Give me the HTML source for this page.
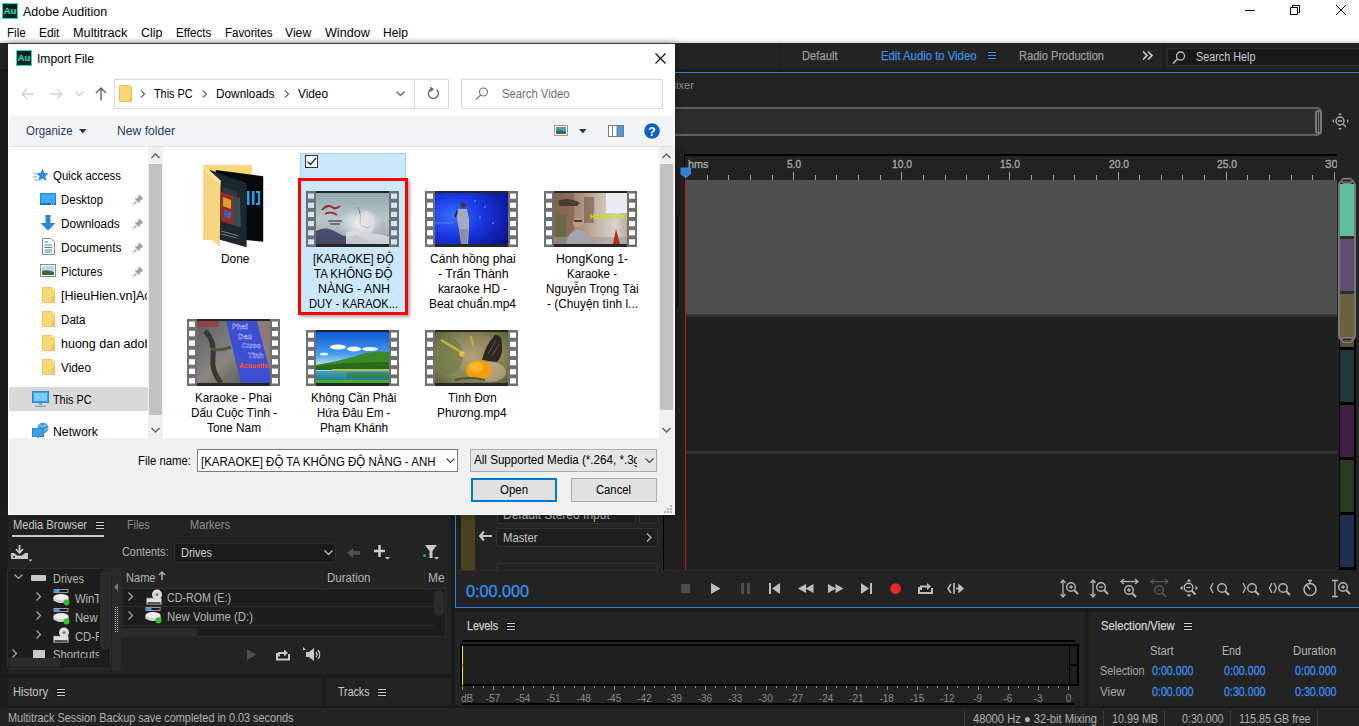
<!DOCTYPE html><html><head><meta charset="utf-8"><style>
*{margin:0;padding:0;box-sizing:border-box}
html,body{width:1359px;height:726px;overflow:hidden;background:#1d1d1d;font-family:"Liberation Sans",sans-serif;position:relative}
.a{position:absolute}
.t{position:absolute;white-space:nowrap;line-height:1}
.au{position:absolute;width:16px;height:16px;background:#00231f;border:1px solid #1fe0c0;color:#2fe8c8;font-size:9.5px;line-height:14px;text-align:center;font-weight:bold}
.c{text-align:center}
svg{position:absolute;overflow:visible}
</style></head><body>
<div class="a" style="left:0px;top:0px;width:1359px;height:43px;background:#fff"></div>
<div class="au" style="left:2px;top:3px">Au</div>
<div class="t" style="left:23px;top:6px;font-size:12.5px;color:#000;">Adobe Audition</div>
<div class="a" style="left:1245px;top:10px;width:10px;height:1px;background:#000"></div>
<svg style="left:1289px;top:4px" width="14" height="14"><path d="M3.5 3.5V1.5H10.5V8.5H8.5M1.5 3.5H8.5V10.5H1.5Z" fill="none" stroke="#000" stroke-width="1"/></svg>
<svg style="left:1335px;top:4px" width="13" height="13"><path d="M1 1L11 11M11 1L1 11" stroke="#000" stroke-width="1"/></svg>
<div class="t" style="left:7.0px;top:27px;font-size:12.5px;color:#000;transform:scaleX(0.9285);transform-origin:0 0;">File</div>
<div class="t" style="left:38.8px;top:27px;font-size:12.5px;color:#000;transform:scaleX(0.9471);transform-origin:0 0;">Edit</div>
<div class="t" style="left:73.0px;top:27px;font-size:12.5px;color:#000;transform:scaleX(1.0154);transform-origin:0 0;">Multitrack</div>
<div class="t" style="left:140.6px;top:27px;font-size:12.5px;color:#000;transform:scaleX(0.9985);transform-origin:0 0;">Clip</div>
<div class="t" style="left:176.0px;top:27px;font-size:12.5px;color:#000;transform:scaleX(0.9268);transform-origin:0 0;">Effects</div>
<div class="t" style="left:224.9px;top:27px;font-size:12.5px;color:#000;transform:scaleX(0.9241);transform-origin:0 0;">Favorites</div>
<div class="t" style="left:285.3px;top:27px;font-size:12.5px;color:#000;transform:scaleX(0.9752);transform-origin:0 0;">View</div>
<div class="t" style="left:324.8px;top:27px;font-size:12.5px;color:#000;transform:scaleX(1.0055);transform-origin:0 0;">Window</div>
<div class="t" style="left:383.0px;top:27px;font-size:12.5px;color:#000;transform:scaleX(0.9686);transform-origin:0 0;">Help</div>
<div class="a" style="left:0px;top:39px;width:1359px;height:4px;background:linear-gradient(#fff,#d8d8d8)"></div>
<div class="a" style="left:0px;top:43px;width:1359px;height:26px;background:#232323"></div>
<div class="a" style="left:0px;top:69px;width:1359px;height:3px;background:#1a1a1a"></div>
<div class="a" style="left:8px;top:72px;width:1351px;height:1px;background:#2f86d8"></div>
<div class="a" style="left:779px;top:43px;width:1px;height:26px;background:#1a1a1a"></div>
<div class="t" style="left:802px;top:50px;font-size:12.5px;color:#9c9c9c;transform:scaleX(0.8964);transform-origin:0 0;-webkit-text-stroke:0.25px #9c9c9c">Default</div>
<div class="t" style="left:881px;top:50px;font-size:12.5px;color:#3d8fe0;transform:scaleX(0.9061);transform-origin:0 0;-webkit-text-stroke:0.25px #3d8fe0">Edit Audio to Video</div>
<div class="a" style="left:987px;top:51px;width:10px;height:3px;background:#191919"></div>
<div class="a" style="left:987px;top:54px;width:10px;height:3px;background:#191919"></div>
<div class="a" style="left:987px;top:57px;width:10px;height:3px;background:#191919"></div>
<div class="a" style="left:988px;top:52px;width:8px;height:1px;background:#3a90f0"></div>
<div class="a" style="left:988px;top:55px;width:8px;height:1px;background:#3a90f0"></div>
<div class="a" style="left:988px;top:58px;width:8px;height:1px;background:#3a90f0"></div>
<div class="t" style="left:1019px;top:50px;font-size:12.5px;color:#9c9c9c;transform:scaleX(0.8865);transform-origin:0 0;-webkit-text-stroke:0.25px #9c9c9c">Radio Production</div>
<svg style="left:1142px;top:51px" width="12" height="9"><path d="M1 0.5L5 4.5L1 8.5M6 0.5L10 4.5L6 8.5" fill="none" stroke="#d0d0d0" stroke-width="1.6"/></svg>
<div class="a" style="left:1163px;top:43px;width:2px;height:26px;background:#1b1b1b"></div>
<div class="a" style="left:1167px;top:48px;width:200px;height:18px;background:#191919;border:1px solid #2e2e2e;border-radius:3px"></div>
<svg style="left:1172px;top:51px" width="14" height="14"><circle cx="8.5" cy="5" r="4" fill="none" stroke="#bdbdbd" stroke-width="1.3"/><path d="M5.5 8L1 12.5" stroke="#bdbdbd" stroke-width="1.6"/></svg>
<div class="t" style="left:1196px;top:51px;font-size:12.5px;color:#c8ccd2;transform:scaleX(0.8650);transform-origin:0 0;">Search Help</div>
<div class="a" style="left:0px;top:73px;width:1359px;height:535px;background:#232323"></div>
<div class="t" style="left:667px;top:80px;font-size:11px;color:#8e8e8e;">Mixer</div>
<div class="a" style="left:600px;top:107px;width:722px;height:29px;background:#2d2d2d;border:2px solid #5f5f5f;border-radius:5px"></div>
<div class="a" style="left:1315px;top:110px;width:7px;height:24px;border:2px solid #777;border-radius:3px;background:#2d2d2d"></div>
<div class="a" style="left:1318px;top:112px;width:1px;height:20px;background:#777"></div>
<svg style="left:1332px;top:113px" width="18" height="18"><circle cx="8" cy="8" r="4" fill="none" stroke="#aaa" stroke-width="1.4"/><path d="M6 8H10M11 11L14 14" stroke="#aaa" stroke-width="1.4"/><path d="M8 0L10 2H6ZM8 17L6 15H10ZM0 8L2 6V10ZM17 8L15 10V6Z" fill="#aaa"/></svg>
<div class="a" style="left:675px;top:147px;width:10px;height:423px;background:#202020"></div>
<div class="a" style="left:677px;top:215px;width:1px;height:93px;background:#000"></div>
<div class="a" style="left:684px;top:154px;width:654px;height:26px;background:#222;border-top:2px solid #000;border-left:1px solid #000"></div>
<div class="t" style="left:688px;top:159px;font-size:11.5px;color:#a8a8a8;transform:scaleX(0.9436);transform-origin:0 0;-webkit-text-stroke:0.35px #a8a8a8">hms</div>
<div class="a" style="left:707px;top:175px;width:1px;height:5px;background:#a0a0a0"></div>
<div class="a" style="left:728px;top:175px;width:1px;height:5px;background:#a0a0a0"></div>
<div class="a" style="left:750px;top:175px;width:1px;height:5px;background:#a0a0a0"></div>
<div class="a" style="left:772px;top:175px;width:1px;height:5px;background:#a0a0a0"></div>
<div class="a" style="left:793px;top:172px;width:1px;height:8px;background:#a0a0a0"></div>
<div class="t" style="left:786.50px;top:159px;font-size:11.5px;color:#a8a8a8;transform:scaleX(0.8758);transform-origin:0 0;-webkit-text-stroke:0.35px #a8a8a8">5.0</div>
<div class="a" style="left:815px;top:175px;width:1px;height:5px;background:#a0a0a0"></div>
<div class="a" style="left:836px;top:175px;width:1px;height:5px;background:#a0a0a0"></div>
<div class="a" style="left:858px;top:175px;width:1px;height:5px;background:#a0a0a0"></div>
<div class="a" style="left:880px;top:175px;width:1px;height:5px;background:#a0a0a0"></div>
<div class="a" style="left:901px;top:172px;width:1px;height:8px;background:#a0a0a0"></div>
<div class="t" style="left:891.50px;top:159px;font-size:11.5px;color:#a8a8a8;transform:scaleX(0.8937);transform-origin:0 0;-webkit-text-stroke:0.35px #a8a8a8">10.0</div>
<div class="a" style="left:923px;top:175px;width:1px;height:5px;background:#a0a0a0"></div>
<div class="a" style="left:945px;top:175px;width:1px;height:5px;background:#a0a0a0"></div>
<div class="a" style="left:966px;top:175px;width:1px;height:5px;background:#a0a0a0"></div>
<div class="a" style="left:988px;top:175px;width:1px;height:5px;background:#a0a0a0"></div>
<div class="a" style="left:1009px;top:172px;width:1px;height:8px;background:#a0a0a0"></div>
<div class="t" style="left:999.50px;top:159px;font-size:11.5px;color:#a8a8a8;transform:scaleX(0.8937);transform-origin:0 0;-webkit-text-stroke:0.35px #a8a8a8">15.0</div>
<div class="a" style="left:1031px;top:175px;width:1px;height:5px;background:#a0a0a0"></div>
<div class="a" style="left:1053px;top:175px;width:1px;height:5px;background:#a0a0a0"></div>
<div class="a" style="left:1074px;top:175px;width:1px;height:5px;background:#a0a0a0"></div>
<div class="a" style="left:1096px;top:175px;width:1px;height:5px;background:#a0a0a0"></div>
<div class="a" style="left:1118px;top:172px;width:1px;height:8px;background:#a0a0a0"></div>
<div class="t" style="left:1108.50px;top:159px;font-size:11.5px;color:#a8a8a8;transform:scaleX(0.8937);transform-origin:0 0;-webkit-text-stroke:0.35px #a8a8a8">20.0</div>
<div class="a" style="left:1139px;top:175px;width:1px;height:5px;background:#a0a0a0"></div>
<div class="a" style="left:1161px;top:175px;width:1px;height:5px;background:#a0a0a0"></div>
<div class="a" style="left:1182px;top:175px;width:1px;height:5px;background:#a0a0a0"></div>
<div class="a" style="left:1204px;top:175px;width:1px;height:5px;background:#a0a0a0"></div>
<div class="a" style="left:1226px;top:172px;width:1px;height:8px;background:#a0a0a0"></div>
<div class="t" style="left:1216.50px;top:159px;font-size:11.5px;color:#a8a8a8;transform:scaleX(0.8937);transform-origin:0 0;-webkit-text-stroke:0.35px #a8a8a8">25.0</div>
<div class="a" style="left:1247px;top:175px;width:1px;height:5px;background:#a0a0a0"></div>
<div class="a" style="left:1269px;top:175px;width:1px;height:5px;background:#a0a0a0"></div>
<div class="a" style="left:1291px;top:175px;width:1px;height:5px;background:#a0a0a0"></div>
<div class="a" style="left:1312px;top:175px;width:1px;height:5px;background:#a0a0a0"></div>
<div class="a" style="left:1334px;top:172px;width:1px;height:8px;background:#a0a0a0"></div>
<div class="t" style="left:1325px;top:159px;width:12px;overflow:hidden;font-size:11.5px;color:#a8a8a8;-webkit-text-stroke:0.35px #a8a8a8">30</div>
<div class="a" style="left:685px;top:180px;width:652px;height:134px;background:#4f4f4f"></div>
<div class="a" style="left:685px;top:314px;width:652px;height:3px;background:#333"></div>
<div class="a" style="left:685px;top:317px;width:652px;height:134px;background:#1f1f1f"></div>
<div class="a" style="left:685px;top:451px;width:652px;height:3px;background:#333"></div>
<div class="a" style="left:685px;top:454px;width:652px;height:116px;background:#1f1f1f"></div>
<div class="a" style="left:1337px;top:154px;width:22px;height:416px;background:#232323"></div>
<div class="a" style="left:685px;top:167px;width:1px;height:403px;background:#c8141a"></div>
<svg style="left:680px;top:167px" width="12" height="12"><path d="M0.5 0.5H11V7L5.7 11.5L0.5 7Z" fill="#2f86d8"/></svg>
<div class="a" style="left:1339px;top:181px;width:17px;height:389px;background:#000"></div>
<div class="a" style="left:1340px;top:184px;width:14px;height:52px;background:#5fbf9a"></div>
<div class="a" style="left:1340px;top:239px;width:14px;height:52px;background:#5e4f72"></div>
<div class="a" style="left:1340px;top:294px;width:14px;height:52px;background:#69643f"></div>
<div class="a" style="left:1340px;top:350px;width:14px;height:52px;background:#1e3b3a"></div>
<div class="a" style="left:1340px;top:405px;width:14px;height:52px;background:#3e2142"></div>
<div class="a" style="left:1340px;top:460px;width:14px;height:52px;background:#2d3a22"></div>
<div class="a" style="left:1340px;top:515px;width:14px;height:52px;background:#1d3050"></div>
<div class="a" style="left:1340px;top:236px;width:14px;height:3px;background:#2e2e2e"></div>
<div class="a" style="left:1340px;top:291px;width:14px;height:3px;background:#2e2e2e"></div>
<div class="a" style="left:1340px;top:341px;width:14px;height:6px;background:#5a5030"></div>
<div class="a" style="left:1338px;top:180px;width:18px;height:161px;border:2px solid #777;border-radius:5px"></div>
<div class="a" style="left:1341px;top:178px;width:12px;height:6px;background:#555;border:1px solid #888;border-radius:3px"></div>
<div class="a" style="left:1343px;top:180px;width:8px;height:1px;background:#222"></div>
<div class="a" style="left:1341px;top:337px;width:12px;height:6px;background:#555;border:1px solid #888;border-radius:3px"></div>
<div class="a" style="left:1343px;top:339px;width:8px;height:1px;background:#222"></div>
<div class="a" style="left:455px;top:73px;width:1px;height:535px;background:#2f86d8"></div>
<div class="a" style="left:456px;top:147px;width:6px;height:423px;background:#1e1e1e"></div>
<div class="a" style="left:461px;top:147px;width:14px;height:423px;background:#4a4220"></div>
<div class="a" style="left:475px;top:147px;width:188px;height:423px;background:#232323"></div>
<div class="a" style="left:663px;top:147px;width:1px;height:423px;background:#000"></div>
<div class="a" style="left:664px;top:147px;width:11px;height:423px;background:#1f1f1f"></div>
<div class="a" style="left:497px;top:505px;width:139px;height:19px;border:1px solid #333;border-radius:2px;background:#1e1e1e"></div>
<div class="t" style="left:503px;top:509px;font-size:12px;color:#b8b8b8;">Default Stereo Input</div>
<div class="a" style="left:639px;top:505px;width:20px;height:19px;border:1px solid #333;border-radius:2px"></div>
<div class="a" style="left:496px;top:528px;width:162px;height:19px;border:1px solid #333;border-radius:2px;background:#1e1e1e"></div>
<div class="t" style="left:503px;top:532px;font-size:12.5px;color:#c4c4c4;transform:scaleX(0.9032);transform-origin:0 0;">Master</div>
<svg style="left:646px;top:533px" width="6" height="9"><path d="M1 0.5L5 4.5L1 8.5" fill="none" stroke="#bbb" stroke-width="1.2"/></svg>
<svg style="left:479px;top:531px" width="14" height="10"><path d="M5 0.5L1 5L5 9.5M1 5H13" fill="none" stroke="#c8c8c8" stroke-width="2"/></svg>
<div class="a" style="left:496px;top:563px;width:162px;height:10px;border:1px solid #333;border-radius:3px"></div>
<div class="a" style="left:456px;top:570px;width:881px;height:1px;background:#2c2c2c"></div>
<div class="a" style="left:456px;top:571px;width:903px;height:36px;background:#232323"></div>
<div class="a" style="left:455px;top:607px;width:904px;height:1px;background:#2f86d8"></div>
<div class="t" style="left:466px;top:583px;font-size:17px;color:#3b90ee;transform:scaleX(0.9521);transform-origin:0 0;-webkit-text-stroke:0.3px #3b90ee">0:00.000</div>
<svg style="left:681px;top:584px" width="10" height="10"><rect x="0" y="0" width="9" height="9" fill="#4d4d4d"/></svg>
<svg style="left:711px;top:583px" width="10" height="12"><path d="M0 0L9.5 5.5L0 11Z" fill="#bdbdbd"/></svg>
<svg style="left:741px;top:583px" width="10" height="12"><rect x="0" y="0" width="3" height="11" fill="#4d4d4d"/><rect x="6" y="0" width="3" height="11" fill="#4d4d4d"/></svg>
<svg style="left:769px;top:583px" width="12" height="12"><rect x="0" y="0" width="2" height="11" fill="#bdbdbd"/><path d="M11 0V11L3 5.5Z" fill="#bdbdbd"/></svg>
<svg style="left:798px;top:584px" width="16" height="10"><path d="M8 0V9L0 4.5ZM15.5 0V9L7.5 4.5Z" fill="#bdbdbd"/></svg>
<svg style="left:828px;top:584px" width="16" height="10"><path d="M0 0V9L8 4.5ZM7.5 0V9L15.5 4.5Z" fill="#bdbdbd"/></svg>
<svg style="left:861px;top:583px" width="12" height="12"><path d="M0 0V11L8 5.5Z" fill="#bdbdbd"/><rect x="9" y="0" width="2" height="11" fill="#bdbdbd"/></svg>
<svg style="left:890px;top:583px" width="12" height="12"><circle cx="5.6" cy="5.6" r="5.3" fill="#e8282c"/></svg>
<svg style="left:918px;top:581px" width="16" height="14"><path d="M1 6V12H14V7" fill="none" stroke="#bdbdbd" stroke-width="2"/><path d="M3 9V5.5H9" fill="none" stroke="#bdbdbd" stroke-width="2"/><path d="M9 2L13 5.5L9 9Z" fill="#bdbdbd"/></svg>
<svg style="left:947px;top:582px" width="18" height="13"><path d="M4 2L1 6.5L4 11M7 1V12" fill="none" stroke="#bdbdbd" stroke-width="1.6"/><path d="M9 6.5H14M12 3L16 6.5L12 10Z" fill="#bdbdbd" stroke="#bdbdbd" stroke-width="1.4"/></svg>
<svg style="left:1059px;top:579px" width="22" height="20"><path d="M4 1V18" stroke="#b5b5b5" stroke-width="1.3"/><path d="M1.5 4L4 1L6.5 4M1.5 15L4 18L6.5 15" fill="none" stroke="#b5b5b5" stroke-width="1.3"/><circle cx="12" cy="8" r="4.3" fill="none" stroke="#b5b5b5" stroke-width="1.4"/><path d="M15 11L19 15" stroke="#b5b5b5" stroke-width="2"/><path d="M10 8H14" stroke="#b5b5b5" stroke-width="1.2"/><path d="M12 6V10" stroke="#b5b5b5" stroke-width="1.2"/></svg>
<svg style="left:1089px;top:579px" width="22" height="20"><path d="M4 1V18" stroke="#b5b5b5" stroke-width="1.3"/><path d="M1.5 4L4 1L6.5 4M1.5 15L4 18L6.5 15" fill="none" stroke="#b5b5b5" stroke-width="1.3"/><circle cx="12" cy="8" r="4.3" fill="none" stroke="#b5b5b5" stroke-width="1.4"/><path d="M15 11L19 15" stroke="#b5b5b5" stroke-width="2"/><path d="M10 8H14" stroke="#b5b5b5" stroke-width="1.2"/></svg>
<svg style="left:1120px;top:579px" width="22" height="20"><path d="M1 2.5H18" stroke="#b5b5b5" stroke-width="1.3"/><path d="M4 0L1 2.5L4 5M15 0L18 2.5L15 5" fill="none" stroke="#b5b5b5" stroke-width="1.3"/><circle cx="9" cy="11" r="4.3" fill="none" stroke="#b5b5b5" stroke-width="1.4"/><path d="M12 14L16 18" stroke="#b5b5b5" stroke-width="2"/><path d="M7 11H11" stroke="#b5b5b5" stroke-width="1.2"/><path d="M9 9V13" stroke="#b5b5b5" stroke-width="1.2"/></svg>
<svg style="left:1150px;top:579px" width="22" height="20"><path d="M1 2.5H18" stroke="#555" stroke-width="1.3"/><path d="M4 0L1 2.5L4 5M15 0L18 2.5L15 5" fill="none" stroke="#555" stroke-width="1.3"/><circle cx="9" cy="11" r="4.3" fill="none" stroke="#555" stroke-width="1.4"/><path d="M12 14L16 18" stroke="#555" stroke-width="2"/><path d="M7 11H11" stroke="#555" stroke-width="1.2"/></svg>
<svg style="left:1180px;top:579px" width="22" height="20"><path d="M9 0L11.5 2.5H6.5ZM9 18L6.5 15.5H11.5ZM0 9L2.5 6.5V11.5ZM18 9L15.5 11.5V6.5Z" fill="#b5b5b5"/><circle cx="8.5" cy="8.5" r="4.3" fill="none" stroke="#b5b5b5" stroke-width="1.4"/><path d="M11.5 11.5L15.5 15.5" stroke="#b5b5b5" stroke-width="2"/><path d="M6.5 8.5H10.5" stroke="#b5b5b5" stroke-width="1.2"/></svg>
<svg style="left:1209px;top:579px" width="22" height="20"><path d="M4 4L1.5 9L4 14" fill="none" stroke="#b5b5b5" stroke-width="1.3"/><circle cx="13" cy="9" r="4.3" fill="none" stroke="#b5b5b5" stroke-width="1.4"/><path d="M16 12L20 16" stroke="#b5b5b5" stroke-width="2"/></svg>
<svg style="left:1242px;top:579px" width="22" height="20"><path d="M1 4L3.5 9L1 14" fill="none" stroke="#b5b5b5" stroke-width="1.3"/><circle cx="10" cy="9" r="4.3" fill="none" stroke="#b5b5b5" stroke-width="1.4"/><path d="M13 12L17 16" stroke="#b5b5b5" stroke-width="2"/></svg>
<svg style="left:1268px;top:579px" width="25" height="20"><path d="M4 4L1.5 9L4 14M6 4L8.5 9L6 14" fill="none" stroke="#b5b5b5" stroke-width="1.3"/><circle cx="15" cy="9" r="4.3" fill="none" stroke="#b5b5b5" stroke-width="1.4"/><path d="M18 12L22 16" stroke="#b5b5b5" stroke-width="2"/></svg>
<svg style="left:1302px;top:579px" width="22" height="20"><circle cx="8" cy="10.5" r="6" fill="none" stroke="#b5b5b5" stroke-width="1.6"/><path d="M8 10.5L5 6M6 1.5H10M8 1.5V4" stroke="#b5b5b5" stroke-width="1.5"/></svg>
<svg style="left:1331px;top:579px" width="22" height="20"><path d="M4 1V18M1 1.5H7M1 17.5H7" stroke="#b5b5b5" stroke-width="1.3"/><circle cx="12" cy="8" r="4.3" fill="none" stroke="#b5b5b5" stroke-width="1.4"/><path d="M15 11L19 15" stroke="#b5b5b5" stroke-width="2"/><path d="M10 8H14" stroke="#b5b5b5" stroke-width="1.2"/><path d="M12 6V10" stroke="#b5b5b5" stroke-width="1.2"/></svg>
<div class="a" style="left:455px;top:608px;width:904px;height:4px;background:#1a1a1a"></div>
<div class="a" style="left:0px;top:608px;width:455px;height:70px;background:#1a1a1a"></div>
<div class="a" style="left:455px;top:612px;width:630px;height:94px;background:#232323"></div>
<div class="a" style="left:1085px;top:612px;width:4px;height:94px;background:#1a1a1a"></div>
<div class="a" style="left:1089px;top:612px;width:270px;height:94px;background:#232323"></div>
<div class="t" style="left:467px;top:620px;font-size:12.5px;color:#cfcfcf;transform:scaleX(0.8580);transform-origin:0 0;-webkit-text-stroke:0.25px #cfcfcf">Levels</div>
<div class="a" style="left:506px;top:622px;width:10px;height:3px;background:#191919"></div>
<div class="a" style="left:506px;top:625px;width:10px;height:3px;background:#191919"></div>
<div class="a" style="left:506px;top:628px;width:10px;height:3px;background:#191919"></div>
<div class="a" style="left:507px;top:623px;width:8px;height:1px;background:#d0d0d0"></div>
<div class="a" style="left:507px;top:626px;width:8px;height:1px;background:#d0d0d0"></div>
<div class="a" style="left:507px;top:629px;width:8px;height:1px;background:#d0d0d0"></div>
<div class="a" style="left:462px;top:640px;width:613px;height:2px;background:#000"></div>
<div class="a" style="left:460px;top:644px;width:619px;height:42px;background:#1f1f1f;border:2px solid #000"></div>
<div class="a" style="left:1069px;top:644px;width:1px;height:42px;background:#000"></div>
<div class="a" style="left:1069px;top:664px;width:10px;height:2px;background:#000"></div>
<div class="a" style="left:462px;top:646px;width:1px;height:19px;background:#f0e800"></div>
<div class="a" style="left:462px;top:666px;width:1px;height:19px;background:#f0e800"></div>
<div class="a" style="left:462px;top:703px;width:613px;height:2px;background:#000"></div>
<div class="a" style="left:462px;top:686px;width:1px;height:4px;background:#8c8c8c"></div>
<div class="a" style="left:473px;top:686px;width:1px;height:2px;background:#8c8c8c"></div>
<div class="a" style="left:483px;top:686px;width:1px;height:2px;background:#8c8c8c"></div>
<div class="a" style="left:493px;top:686px;width:1px;height:4px;background:#8c8c8c"></div>
<div class="a" style="left:503px;top:686px;width:1px;height:2px;background:#8c8c8c"></div>
<div class="a" style="left:513px;top:686px;width:1px;height:2px;background:#8c8c8c"></div>
<div class="a" style="left:523px;top:686px;width:1px;height:4px;background:#8c8c8c"></div>
<div class="a" style="left:533px;top:686px;width:1px;height:2px;background:#8c8c8c"></div>
<div class="a" style="left:543px;top:686px;width:1px;height:2px;background:#8c8c8c"></div>
<div class="a" style="left:553px;top:686px;width:1px;height:4px;background:#8c8c8c"></div>
<div class="a" style="left:564px;top:686px;width:1px;height:2px;background:#8c8c8c"></div>
<div class="a" style="left:574px;top:686px;width:1px;height:2px;background:#8c8c8c"></div>
<div class="a" style="left:584px;top:686px;width:1px;height:4px;background:#8c8c8c"></div>
<div class="a" style="left:594px;top:686px;width:1px;height:2px;background:#8c8c8c"></div>
<div class="a" style="left:604px;top:686px;width:1px;height:2px;background:#8c8c8c"></div>
<div class="a" style="left:614px;top:686px;width:1px;height:4px;background:#8c8c8c"></div>
<div class="a" style="left:624px;top:686px;width:1px;height:2px;background:#8c8c8c"></div>
<div class="a" style="left:634px;top:686px;width:1px;height:2px;background:#8c8c8c"></div>
<div class="a" style="left:644px;top:686px;width:1px;height:4px;background:#8c8c8c"></div>
<div class="a" style="left:654px;top:686px;width:1px;height:2px;background:#8c8c8c"></div>
<div class="a" style="left:664px;top:686px;width:1px;height:2px;background:#8c8c8c"></div>
<div class="a" style="left:675px;top:686px;width:1px;height:4px;background:#8c8c8c"></div>
<div class="a" style="left:685px;top:686px;width:1px;height:2px;background:#8c8c8c"></div>
<div class="a" style="left:695px;top:686px;width:1px;height:2px;background:#8c8c8c"></div>
<div class="a" style="left:705px;top:686px;width:1px;height:4px;background:#8c8c8c"></div>
<div class="a" style="left:715px;top:686px;width:1px;height:2px;background:#8c8c8c"></div>
<div class="a" style="left:725px;top:686px;width:1px;height:2px;background:#8c8c8c"></div>
<div class="a" style="left:735px;top:686px;width:1px;height:4px;background:#8c8c8c"></div>
<div class="a" style="left:745px;top:686px;width:1px;height:2px;background:#8c8c8c"></div>
<div class="a" style="left:755px;top:686px;width:1px;height:2px;background:#8c8c8c"></div>
<div class="a" style="left:766px;top:686px;width:1px;height:4px;background:#8c8c8c"></div>
<div class="a" style="left:776px;top:686px;width:1px;height:2px;background:#8c8c8c"></div>
<div class="a" style="left:786px;top:686px;width:1px;height:2px;background:#8c8c8c"></div>
<div class="a" style="left:796px;top:686px;width:1px;height:4px;background:#8c8c8c"></div>
<div class="a" style="left:806px;top:686px;width:1px;height:2px;background:#8c8c8c"></div>
<div class="a" style="left:816px;top:686px;width:1px;height:2px;background:#8c8c8c"></div>
<div class="a" style="left:826px;top:686px;width:1px;height:4px;background:#8c8c8c"></div>
<div class="a" style="left:836px;top:686px;width:1px;height:2px;background:#8c8c8c"></div>
<div class="a" style="left:846px;top:686px;width:1px;height:2px;background:#8c8c8c"></div>
<div class="a" style="left:856px;top:686px;width:1px;height:4px;background:#8c8c8c"></div>
<div class="a" style="left:866px;top:686px;width:1px;height:2px;background:#8c8c8c"></div>
<div class="a" style="left:877px;top:686px;width:1px;height:2px;background:#8c8c8c"></div>
<div class="a" style="left:887px;top:686px;width:1px;height:4px;background:#8c8c8c"></div>
<div class="a" style="left:897px;top:686px;width:1px;height:2px;background:#8c8c8c"></div>
<div class="a" style="left:907px;top:686px;width:1px;height:2px;background:#8c8c8c"></div>
<div class="a" style="left:917px;top:686px;width:1px;height:4px;background:#8c8c8c"></div>
<div class="a" style="left:927px;top:686px;width:1px;height:2px;background:#8c8c8c"></div>
<div class="a" style="left:937px;top:686px;width:1px;height:2px;background:#8c8c8c"></div>
<div class="a" style="left:947px;top:686px;width:1px;height:4px;background:#8c8c8c"></div>
<div class="a" style="left:957px;top:686px;width:1px;height:2px;background:#8c8c8c"></div>
<div class="a" style="left:968px;top:686px;width:1px;height:2px;background:#8c8c8c"></div>
<div class="a" style="left:978px;top:686px;width:1px;height:4px;background:#8c8c8c"></div>
<div class="a" style="left:988px;top:686px;width:1px;height:2px;background:#8c8c8c"></div>
<div class="a" style="left:998px;top:686px;width:1px;height:2px;background:#8c8c8c"></div>
<div class="a" style="left:1008px;top:686px;width:1px;height:4px;background:#8c8c8c"></div>
<div class="a" style="left:1018px;top:686px;width:1px;height:2px;background:#8c8c8c"></div>
<div class="a" style="left:1028px;top:686px;width:1px;height:2px;background:#8c8c8c"></div>
<div class="a" style="left:1038px;top:686px;width:1px;height:4px;background:#8c8c8c"></div>
<div class="a" style="left:1048px;top:686px;width:1px;height:2px;background:#8c8c8c"></div>
<div class="a" style="left:1058px;top:686px;width:1px;height:2px;background:#8c8c8c"></div>
<div class="a" style="left:1068px;top:686px;width:1px;height:4px;background:#8c8c8c"></div>
<div class="t" style="left:461px;top:694px;font-size:10px;color:#8a8a8a;">dB</div>
<div class="t" style="left:472.8px;top:694px;width:40px;text-align:center;font-size:10px;color:#8a8a8a">-57</div>
<div class="t" style="left:503.1px;top:694px;width:40px;text-align:center;font-size:10px;color:#8a8a8a">-54</div>
<div class="t" style="left:533.4px;top:694px;width:40px;text-align:center;font-size:10px;color:#8a8a8a">-51</div>
<div class="t" style="left:563.7px;top:694px;width:40px;text-align:center;font-size:10px;color:#8a8a8a">-48</div>
<div class="t" style="left:594.0px;top:694px;width:40px;text-align:center;font-size:10px;color:#8a8a8a">-45</div>
<div class="t" style="left:624.3px;top:694px;width:40px;text-align:center;font-size:10px;color:#8a8a8a">-42</div>
<div class="t" style="left:654.6px;top:694px;width:40px;text-align:center;font-size:10px;color:#8a8a8a">-39</div>
<div class="t" style="left:684.9px;top:694px;width:40px;text-align:center;font-size:10px;color:#8a8a8a">-36</div>
<div class="t" style="left:715.2px;top:694px;width:40px;text-align:center;font-size:10px;color:#8a8a8a">-33</div>
<div class="t" style="left:745.5px;top:694px;width:40px;text-align:center;font-size:10px;color:#8a8a8a">-30</div>
<div class="t" style="left:775.8px;top:694px;width:40px;text-align:center;font-size:10px;color:#8a8a8a">-27</div>
<div class="t" style="left:806.1px;top:694px;width:40px;text-align:center;font-size:10px;color:#8a8a8a">-24</div>
<div class="t" style="left:836.4px;top:694px;width:40px;text-align:center;font-size:10px;color:#8a8a8a">-21</div>
<div class="t" style="left:866.7px;top:694px;width:40px;text-align:center;font-size:10px;color:#8a8a8a">-18</div>
<div class="t" style="left:897.0px;top:694px;width:40px;text-align:center;font-size:10px;color:#8a8a8a">-15</div>
<div class="t" style="left:927.3px;top:694px;width:40px;text-align:center;font-size:10px;color:#8a8a8a">-12</div>
<div class="t" style="left:957.6px;top:694px;width:40px;text-align:center;font-size:10px;color:#8a8a8a">-9</div>
<div class="t" style="left:987.9px;top:694px;width:40px;text-align:center;font-size:10px;color:#8a8a8a">-6</div>
<div class="t" style="left:1018.2px;top:694px;width:40px;text-align:center;font-size:10px;color:#8a8a8a">-3</div>
<div class="t" style="left:1048.5px;top:694px;width:40px;text-align:center;font-size:10px;color:#8a8a8a">0</div>
<div class="t" style="left:1101px;top:620px;font-size:12.5px;color:#d0d0d0;transform:scaleX(0.8990);transform-origin:0 0;-webkit-text-stroke:0.25px #d0d0d0">Selection/View</div>
<div class="a" style="left:1183px;top:622px;width:10px;height:3px;background:#191919"></div>
<div class="a" style="left:1183px;top:625px;width:10px;height:3px;background:#191919"></div>
<div class="a" style="left:1183px;top:628px;width:10px;height:3px;background:#191919"></div>
<div class="a" style="left:1184px;top:623px;width:8px;height:1px;background:#d0d0d0"></div>
<div class="a" style="left:1184px;top:626px;width:8px;height:1px;background:#d0d0d0"></div>
<div class="a" style="left:1184px;top:629px;width:8px;height:1px;background:#d0d0d0"></div>
<div class="t" style="left:1150px;top:645px;font-size:12px;color:#b5b5b5;transform:scaleX(0.9274);transform-origin:0 0;">Start</div>
<div class="t" style="left:1222px;top:645px;font-size:12px;color:#b5b5b5;transform:scaleX(0.8899);transform-origin:0 0;">End</div>
<div class="t" style="left:1293px;top:645px;font-size:12px;color:#b5b5b5;transform:scaleX(0.9481);transform-origin:0 0;">Duration</div>
<div class="t" style="left:1100px;top:665px;font-size:12px;color:#a8a8a8;transform:scaleX(0.9015);transform-origin:0 0;">Selection</div>
<div class="t" style="left:1100px;top:686px;font-size:12px;color:#a8a8a8;transform:scaleX(0.9693);transform-origin:0 0;">View</div>
<div class="t" style="left:1152px;top:665px;font-size:12px;color:#3b90ee;transform:scaleX(0.8885);transform-origin:0 0;-webkit-text-stroke:0.3px #3b90ee">0:00.000</div>
<div class="t" style="left:1152px;top:686px;font-size:12px;color:#3b90ee;transform:scaleX(0.8885);transform-origin:0 0;-webkit-text-stroke:0.3px #3b90ee">0:00.000</div>
<div class="t" style="left:1224px;top:665px;font-size:12px;color:#3b90ee;transform:scaleX(0.8885);transform-origin:0 0;-webkit-text-stroke:0.3px #3b90ee">0:00.000</div>
<div class="t" style="left:1224px;top:686px;font-size:12px;color:#3b90ee;transform:scaleX(0.8885);transform-origin:0 0;-webkit-text-stroke:0.3px #3b90ee">0:30.000</div>
<div class="t" style="left:1295px;top:665px;font-size:12px;color:#3b90ee;transform:scaleX(0.8885);transform-origin:0 0;-webkit-text-stroke:0.3px #3b90ee">0:00.000</div>
<div class="t" style="left:1295px;top:686px;font-size:12px;color:#3b90ee;transform:scaleX(0.8885);transform-origin:0 0;-webkit-text-stroke:0.3px #3b90ee">0:30.000</div>
<div class="a" style="left:0px;top:706px;width:1359px;height:2px;background:#1a1a1a"></div>
<div class="a" style="left:0px;top:708px;width:1359px;height:18px;background:#232323"></div>
<div class="t" style="left:8px;top:712px;font-size:12.5px;color:#b0b0b0;transform:scaleX(0.8688);transform-origin:0 0;">Multitrack Session Backup save completed in 0.03 seconds</div>
<div class="a" style="left:964px;top:710px;width:1px;height:16px;background:#3a3a3a"></div>
<div class="a" style="left:1103px;top:710px;width:1px;height:16px;background:#3a3a3a"></div>
<div class="a" style="left:1164px;top:710px;width:1px;height:16px;background:#3a3a3a"></div>
<div class="a" style="left:1230px;top:710px;width:1px;height:16px;background:#3a3a3a"></div>
<div class="a" style="left:1317px;top:710px;width:1px;height:16px;background:#3a3a3a"></div>
<div class="t" style="left:973px;top:713px;font-size:12px;color:#b0b0b0;transform:scaleX(0.9302);transform-origin:0 0;">48000 Hz &#9679; 32-bit Mixing</div>
<div class="t" style="left:1112px;top:713px;font-size:12px;color:#b0b0b0;transform:scaleX(0.8956);transform-origin:0 0;">10.99 MB</div>
<div class="t" style="left:1182px;top:713px;font-size:12px;color:#b0b0b0;transform:scaleX(0.8885);transform-origin:0 0;">0:30.000</div>
<div class="t" style="left:1239px;top:713px;font-size:12px;color:#b0b0b0;transform:scaleX(0.8883);transform-origin:0 0;">115.85 GB free</div>
<div class="a" style="left:0px;top:515px;width:8px;height:159px;background:#1b1b1b"></div>
<div class="a" style="left:8px;top:515px;width:443px;height:159px;background:#232323"></div>
<div class="a" style="left:451px;top:515px;width:4px;height:193px;background:#1b1b1b"></div>
<div class="t" style="left:13px;top:519px;font-size:12.5px;color:#c8c8c8;transform:scaleX(0.8877);transform-origin:0 0;">Media Browser</div>
<div class="a" style="left:95px;top:521px;width:10px;height:3px;background:#191919"></div>
<div class="a" style="left:95px;top:524px;width:10px;height:3px;background:#191919"></div>
<div class="a" style="left:95px;top:527px;width:10px;height:3px;background:#191919"></div>
<div class="a" style="left:96px;top:522px;width:8px;height:1px;background:#d0d0d0"></div>
<div class="a" style="left:96px;top:525px;width:8px;height:1px;background:#d0d0d0"></div>
<div class="a" style="left:96px;top:528px;width:8px;height:1px;background:#d0d0d0"></div>
<div class="a" style="left:12px;top:535px;width:92px;height:2px;background:#c8c8c8"></div>
<div class="t" style="left:127px;top:519px;font-size:12.5px;color:#8f8f8f;transform:scaleX(0.8526);transform-origin:0 0;">Files</div>
<div class="t" style="left:190px;top:519px;font-size:12.5px;color:#8f8f8f;transform:scaleX(0.8862);transform-origin:0 0;">Markers</div>
<svg style="left:11px;top:545px" width="22" height="17"><path d="M8.5 0V7M5 4L8.5 8L12 4" fill="none" stroke="#c8c8c8" stroke-width="1.8"/><path d="M0 8H3L6 10.5H11L14 8H17V14H0Z" fill="#c8c8c8"/><rect x="2" y="11" width="2" height="1.5" fill="#232323"/><path d="M17.5 14.5H21.5L19.5 16.5Z" fill="#c8c8c8"/></svg>
<div class="t" style="left:122px;top:546px;font-size:12.5px;color:#b0b0b0;transform:scaleX(0.8692);transform-origin:0 0;">Contents:</div>
<div class="a" style="left:174px;top:543px;width:162px;height:20px;background:#1b1b1b;border:1px solid #2e2e2e;border-radius:3px"></div>
<div class="t" style="left:181px;top:547px;font-size:12.5px;color:#d0d0d0;transform:scaleX(0.8753);transform-origin:0 0;">Drives</div>
<svg style="left:324px;top:550px" width="9" height="6"><path d="M0.5 0.5L4.5 4.5L8.5 0.5" fill="none" stroke="#c8c8c8" stroke-width="1.2"/></svg>
<svg style="left:347px;top:548px" width="14" height="10"><path d="M0 5L6 0V3H13V7H6V10Z" fill="#505050"/></svg>
<svg style="left:374px;top:545px" width="16" height="16"><path d="M5.5 0V12M0 6H11" stroke="#d0d0d0" stroke-width="2.4"/><path d="M11 12H16L13.5 14.5Z" fill="#c8c8c8"/></svg>
<svg style="left:422px;top:545px" width="18" height="16"><path d="M3 0H15L10.5 6V13H7.5V6Z" fill="#c8c8c8"/><circle cx="2.5" cy="10.5" r="1.6" fill="#1fb32a"/><path d="M12 12H17L14.5 14.5Z" fill="#c8c8c8"/></svg>
<div class="a" style="left:7px;top:568px;width:104px;height:101px;border:1px solid #2e2e2e;border-radius:3px;background:#1d1d1d"></div>
<div class="a" style="left:100px;top:570px;width:10px;height:80px;background:#2b2b2b;border-radius:5px"></div>
<div class="a" style="left:8px;top:658px;width:53px;height:9px;background:#2b2b2b;border-radius:5px"></div>
<svg style="left:14px;top:574px" width="10" height="6"><path d="M0.5 0.5L4.5 4.5L8.5 0.5" fill="none" stroke="#aaa" stroke-width="1.2"/></svg>
<div class="a" style="left:31px;top:575px;width:15px;height:6px;background:#c8c8c8;border-radius:1px"></div>
<div class="t" style="left:53px;top:573px;font-size:12.5px;color:#b5b5b5;transform:scaleX(0.8753);transform-origin:0 0;">Drives</div>
<svg style="left:36px;top:592px" width="6" height="10"><path d="M0.5 0.5L4.5 4.5L0.5 8.5" fill="none" stroke="#aaa" stroke-width="1.2"/></svg>
<svg style="left:53px;top:589px" width="17" height="17"><rect x="1" y="0.5" width="14" height="3" fill="none" stroke="#999" stroke-width="1"/><rect x="1.5" y="1" width="5" height="2" fill="#3aa0ff"/><ellipse cx="8" cy="10" rx="7.5" ry="4" fill="#d8d8d8"/><rect x="0.5" y="8" width="15" height="4" fill="#cfcfcf"/><ellipse cx="8" cy="8" rx="7.5" ry="3" fill="#eee"/><circle cx="13.5" cy="13.5" r="3" fill="#2fc02f"/></svg>
<div class="t" style="left:75px;top:593px;font-size:12.5px;color:#b5b5b5;width:24px;overflow:hidden"><span style="display:inline-block;transform:scaleX(0.9);transform-origin:0 0">WinT</span></div>
<svg style="left:36px;top:611px" width="6" height="10"><path d="M0.5 0.5L4.5 4.5L0.5 8.5" fill="none" stroke="#aaa" stroke-width="1.2"/></svg>
<svg style="left:53px;top:608px" width="17" height="17"><rect x="1" y="0.5" width="14" height="3" fill="none" stroke="#999" stroke-width="1"/><rect x="1.5" y="1" width="5" height="2" fill="#3aa0ff"/><ellipse cx="8" cy="10" rx="7.5" ry="4" fill="#d8d8d8"/><rect x="0.5" y="8" width="15" height="4" fill="#cfcfcf"/><ellipse cx="8" cy="8" rx="7.5" ry="3" fill="#eee"/><circle cx="13.5" cy="13.5" r="3" fill="#2fc02f"/></svg>
<div class="t" style="left:75px;top:612px;font-size:12.5px;color:#b5b5b5;width:24px;overflow:hidden"><span style="display:inline-block;transform:scaleX(0.9);transform-origin:0 0">New</span></div>
<svg style="left:36px;top:630px" width="6" height="10"><path d="M0.5 0.5L4.5 4.5L0.5 8.5" fill="none" stroke="#aaa" stroke-width="1.2"/></svg>
<svg style="left:53px;top:627px" width="17" height="17"><rect x="0.5" y="9" width="15" height="6.5" fill="#e0e0e0" stroke="#777" stroke-width="0.6"/><rect x="1.5" y="13" width="13" height="2" fill="#555"/><circle cx="11" cy="5.5" r="5" fill="#ddd"/><circle cx="11" cy="5.5" r="1.5" fill="#777"/><circle cx="11" cy="13.5" r="0.7" fill="#2fc02f"/></svg>
<div class="t" style="left:75px;top:631px;font-size:12.5px;color:#b5b5b5;width:24px;overflow:hidden"><span style="display:inline-block;transform:scaleX(0.9);transform-origin:0 0">CD-R</span></div>
<svg style="left:12px;top:649px" width="6" height="10"><path d="M0.5 0.5L4.5 4.5L0.5 8.5" fill="none" stroke="#aaa" stroke-width="1.2"/></svg>
<div class="a" style="left:33px;top:650px;width:12px;height:8px;background:#c8c8c8"></div>
<div class="t" style="left:53px;top:649px;font-size:12.5px;color:#b5b5b5;width:46px;height:9px;overflow:hidden"><span style="display:inline-block;transform:scaleX(0.9);transform-origin:0 0">Shortcuts</span></div>
<div class="a" style="left:112px;top:568px;width:9px;height:103px;background:#2a2a2a"></div>
<svg style="left:114px;top:583px" width="5" height="8"><path d="M4 0V8L0 4Z" fill="#777"/></svg>
<div class="a" style="left:115px;top:607px;width:1px;height:1px;background:#bbb"></div>
<div class="a" style="left:117px;top:607px;width:1px;height:1px;background:#bbb"></div>
<div class="a" style="left:115px;top:609px;width:1px;height:1px;background:#bbb"></div>
<div class="a" style="left:117px;top:609px;width:1px;height:1px;background:#bbb"></div>
<div class="a" style="left:115px;top:611px;width:1px;height:1px;background:#bbb"></div>
<div class="a" style="left:117px;top:611px;width:1px;height:1px;background:#bbb"></div>
<div class="a" style="left:115px;top:613px;width:1px;height:1px;background:#bbb"></div>
<div class="a" style="left:117px;top:613px;width:1px;height:1px;background:#bbb"></div>
<div class="a" style="left:115px;top:615px;width:1px;height:1px;background:#bbb"></div>
<div class="a" style="left:117px;top:615px;width:1px;height:1px;background:#bbb"></div>
<div class="a" style="left:115px;top:617px;width:1px;height:1px;background:#bbb"></div>
<div class="a" style="left:117px;top:617px;width:1px;height:1px;background:#bbb"></div>
<div class="a" style="left:115px;top:619px;width:1px;height:1px;background:#bbb"></div>
<div class="a" style="left:117px;top:619px;width:1px;height:1px;background:#bbb"></div>
<div class="a" style="left:115px;top:621px;width:1px;height:1px;background:#bbb"></div>
<div class="a" style="left:117px;top:621px;width:1px;height:1px;background:#bbb"></div>
<div class="a" style="left:115px;top:623px;width:1px;height:1px;background:#bbb"></div>
<div class="a" style="left:117px;top:623px;width:1px;height:1px;background:#bbb"></div>
<div class="a" style="left:115px;top:625px;width:1px;height:1px;background:#bbb"></div>
<div class="a" style="left:117px;top:625px;width:1px;height:1px;background:#bbb"></div>
<div class="a" style="left:115px;top:627px;width:1px;height:1px;background:#bbb"></div>
<div class="a" style="left:117px;top:627px;width:1px;height:1px;background:#bbb"></div>
<div class="a" style="left:115px;top:629px;width:1px;height:1px;background:#bbb"></div>
<div class="a" style="left:117px;top:629px;width:1px;height:1px;background:#bbb"></div>
<div class="a" style="left:115px;top:631px;width:1px;height:1px;background:#bbb"></div>
<div class="a" style="left:117px;top:631px;width:1px;height:1px;background:#bbb"></div>
<div class="t" style="left:126px;top:572px;font-size:12.5px;color:#b5b5b5;transform:scaleX(0.8848);transform-origin:0 0;">Name</div>
<svg style="left:158px;top:571px" width="8" height="10"><path d="M4 9V1M1 4L4 1L7 4" fill="none" stroke="#aaa" stroke-width="1.5"/></svg>
<div class="a" style="left:322px;top:570px;width:1px;height:16px;background:#2e2e2e"></div>
<div class="t" style="left:327px;top:572px;font-size:12.5px;color:#b5b5b5;transform:scaleX(0.9207);transform-origin:0 0;">Duration</div>
<div class="a" style="left:424px;top:570px;width:1px;height:16px;background:#2e2e2e"></div>
<div class="t" style="left:428px;top:572px;font-size:12px;color:#b5b5b5;width:17px;overflow:hidden">Med</div>
<div class="a" style="left:122px;top:588px;width:324px;height:49px;background:#1d1d1d;border:1px solid #2c2c2c;border-top:1px solid #2e2e2e"></div>
<div class="a" style="left:122px;top:606px;width:312px;height:1px;background:#2e2e2e"></div>
<div class="a" style="left:122px;top:625px;width:312px;height:1px;background:#2e2e2e"></div>
<div class="a" style="left:434px;top:590px;width:10px;height:26px;background:#2b2b2b;border-radius:5px"></div>
<div class="a" style="left:122px;top:628px;width:76px;height:9px;background:#2b2b2b;border-radius:5px"></div>
<svg style="left:128px;top:592px" width="6" height="10"><path d="M0.5 0.5L4.5 4.5L0.5 8.5" fill="none" stroke="#aaa" stroke-width="1.2"/></svg>
<svg style="left:146px;top:589px" width="17" height="17"><rect x="0.5" y="9" width="15" height="6.5" fill="#e0e0e0" stroke="#777" stroke-width="0.6"/><rect x="1.5" y="13" width="13" height="2" fill="#555"/><circle cx="11" cy="5.5" r="5" fill="#ddd"/><circle cx="11" cy="5.5" r="1.5" fill="#777"/><circle cx="11" cy="13.5" r="0.7" fill="#2fc02f"/></svg>
<div class="t" style="left:167px;top:592px;font-size:12.5px;color:#b5b5b5;transform:scaleX(0.8535);transform-origin:0 0;">CD-ROM (E:)</div>
<svg style="left:128px;top:611px" width="6" height="10"><path d="M0.5 0.5L4.5 4.5L0.5 8.5" fill="none" stroke="#aaa" stroke-width="1.2"/></svg>
<svg style="left:145px;top:607px" width="17" height="17"><rect x="1" y="0.5" width="14" height="3" fill="none" stroke="#999" stroke-width="1"/><rect x="1.5" y="1" width="5" height="2" fill="#3aa0ff"/><ellipse cx="8" cy="10" rx="7.5" ry="4" fill="#d8d8d8"/><rect x="0.5" y="8" width="15" height="4" fill="#cfcfcf"/><ellipse cx="8" cy="8" rx="7.5" ry="3" fill="#eee"/><circle cx="13.5" cy="13.5" r="3" fill="#2fc02f"/></svg>
<div class="t" style="left:167px;top:611px;font-size:12.5px;color:#b5b5b5;transform:scaleX(0.9104);transform-origin:0 0;">New Volume (D:)</div>
<svg style="left:247px;top:649px" width="10" height="12"><path d="M0 0L9 5.5L0 11Z" fill="#4f4f4f"/></svg>
<svg style="left:276px;top:648px" width="15" height="13"><path d="M1 5V11.5H13V6" fill="none" stroke="#c8c8c8" stroke-width="2"/><path d="M3 8.5V5H8" fill="none" stroke="#c8c8c8" stroke-width="1.8"/><path d="M8 1.5L12 5L8 8.5Z" fill="#c8c8c8"/></svg>
<svg style="left:303px;top:647px" width="22" height="15"><path d="M0 0L3 3H0Z" fill="#c8c8c8"/><path d="M3 5H6L11 1V14L6 10H3Z" fill="#c8c8c8"/><path d="M13 5Q15 7.5 13 10M15 3Q18.5 7.5 15 12" fill="none" stroke="#c8c8c8" stroke-width="1.3"/></svg>
<div class="a" style="left:8px;top:678px;width:314px;height:28px;background:#232323"></div>
<div class="a" style="left:326px;top:678px;width:125px;height:28px;background:#232323"></div>
<div class="t" style="left:13px;top:686px;font-size:12.5px;color:#c8c8c8;transform:scaleX(0.9000);transform-origin:0 0;">History</div>
<div class="a" style="left:56px;top:688px;width:10px;height:3px;background:#191919"></div>
<div class="a" style="left:56px;top:691px;width:10px;height:3px;background:#191919"></div>
<div class="a" style="left:56px;top:694px;width:10px;height:3px;background:#191919"></div>
<div class="a" style="left:57px;top:689px;width:8px;height:1px;background:#d0d0d0"></div>
<div class="a" style="left:57px;top:692px;width:8px;height:1px;background:#d0d0d0"></div>
<div class="a" style="left:57px;top:695px;width:8px;height:1px;background:#d0d0d0"></div>
<div class="t" style="left:338px;top:686px;font-size:12.5px;color:#c8c8c8;transform:scaleX(0.8505);transform-origin:0 0;">Tracks</div>
<div class="a" style="left:377px;top:688px;width:10px;height:3px;background:#191919"></div>
<div class="a" style="left:377px;top:691px;width:10px;height:3px;background:#191919"></div>
<div class="a" style="left:377px;top:694px;width:10px;height:3px;background:#191919"></div>
<div class="a" style="left:378px;top:689px;width:8px;height:1px;background:#d0d0d0"></div>
<div class="a" style="left:378px;top:692px;width:8px;height:1px;background:#d0d0d0"></div>
<div class="a" style="left:378px;top:695px;width:8px;height:1px;background:#d0d0d0"></div>
<div class="a" style="left:0px;top:73px;width:8px;height:442px;background:#1e1e1e"></div>
<div class="a" style="left:8px;top:43px;width:667px;height:472px;background:#fff;box-shadow:0 0 8px rgba(0,0,0,0.3)"></div>
<div class="a" style="left:8px;top:43px;width:667px;height:1px;background:#3a3a3a"></div>
<div class="au" style="left:16px;top:50px">Au</div>
<div class="t" style="left:37px;top:53px;font-size:12.5px;color:#000;transform:scaleX(0.9655);transform-origin:0 0;">Import File</div>
<svg style="left:655px;top:53px" width="11" height="11"><path d="M0.5 0.5L10.5 10.5M10.5 0.5L0.5 10.5" stroke="#000" stroke-width="1.1"/></svg>
<svg style="left:21px;top:88px" width="13" height="12"><path d="M6 1L1 6L6 11M1 6H12.5" fill="none" stroke="#cfcfcf" stroke-width="1.3"/></svg>
<svg style="left:50px;top:88px" width="13" height="12"><path d="M7 1L12 6L7 11M0.5 6H12" fill="none" stroke="#cfcfcf" stroke-width="1.3"/></svg>
<svg style="left:75px;top:91px" width="9" height="6"><path d="M0.5 0.5L4.5 4.5L8.5 0.5" fill="none" stroke="#cfcfcf" stroke-width="1.2"/></svg>
<svg style="left:95px;top:87px" width="12" height="14"><path d="M1 6L6 1L11 6M6 1V13.5" fill="none" stroke="#6a6a6a" stroke-width="1.5"/></svg>
<div class="a" style="left:114px;top:79px;width:301px;height:30px;border:1px solid #d9d9d9;border-right:none"></div>
<div class="a" style="left:414px;top:79px;width:35px;height:30px;border:1px solid #d9d9d9"></div>
<svg style="left:119px;top:85px" width="14" height="17"><path d="M0.5 0.5H11L12.5 2V16.5H0.5Z" fill="#f8d775" stroke="#e0b84a" stroke-width="0.8"/><path d="M10 10H13V16.5H10Z" fill="#f0c65a"/></svg>
<svg style="left:140px;top:90px" width="6" height="8"><path d="M1 0.5L4.5 4L1 7.5" fill="none" stroke="#6a6a6a" stroke-width="1.3"/></svg>
<div class="t" style="left:154px;top:88px;font-size:12.5px;color:#000;transform:scaleX(0.8661);transform-origin:0 0;">This PC</div>
<svg style="left:202px;top:90px" width="6" height="8"><path d="M1 0.5L4.5 4L1 7.5" fill="none" stroke="#6a6a6a" stroke-width="1.3"/></svg>
<div class="t" style="left:216px;top:88px;font-size:12.5px;color:#000;transform:scaleX(0.9460);transform-origin:0 0;">Downloads</div>
<svg style="left:284px;top:90px" width="6" height="8"><path d="M1 0.5L4.5 4L1 7.5" fill="none" stroke="#6a6a6a" stroke-width="1.3"/></svg>
<div class="t" style="left:298px;top:88px;font-size:12.5px;color:#000;transform:scaleX(0.9451);transform-origin:0 0;">Video</div>
<svg style="left:396px;top:91px" width="9" height="6"><path d="M0.5 0.5L4.5 4.5L8.5 0.5" fill="none" stroke="#6a6a6a" stroke-width="1.5"/></svg>
<svg style="left:427px;top:85px" width="13" height="15"><path d="M9.5 4.5A5 5 0 1 1 4 4" fill="none" stroke="#6a6a6a" stroke-width="1.4"/><path d="M3 1.5L7 4L3.5 7.5Z" fill="#6a6a6a"/></svg>
<div class="a" style="left:461px;top:79px;width:202px;height:30px;border:1px solid #d9d9d9"></div>
<svg style="left:475px;top:87px" width="14" height="14"><circle cx="8.5" cy="5" r="4" fill="none" stroke="#6d6d6d" stroke-width="1.1"/><path d="M5.7 7.8L1 12.5" stroke="#8a6d8a" stroke-width="1.2"/></svg>
<div class="t" style="left:502px;top:88px;font-size:12.5px;color:#6d6d6d;transform:scaleX(0.9022);transform-origin:0 0;">Search Video</div>
<div class="a" style="left:9px;top:116px;width:665px;height:30px;background:#f3f4f6"></div>
<div class="a" style="left:9px;top:146px;width:665px;height:1px;background:#e3e3e3"></div>
<div class="t" style="left:26px;top:125px;font-size:12.5px;color:#1e395b;transform:scaleX(0.9169);transform-origin:0 0;">Organize</div>
<svg style="left:79px;top:129px" width="8" height="5"><path d="M0 0H7.5L3.75 4.5Z" fill="#1e395b"/></svg>
<div class="t" style="left:117px;top:125px;font-size:12.5px;color:#1e395b;transform:scaleX(0.9708);transform-origin:0 0;">New folder</div>
<svg style="left:554px;top:125px" width="15" height="12"><rect x="0.5" y="0.5" width="13" height="10" fill="#fff" stroke="#9a9a9a"/><rect x="2" y="2" width="10" height="7" fill="#4d9ad0"/><path d="M2 6Q6 4 12 7V9H2Z" fill="#3b6b3b"/></svg>
<svg style="left:579px;top:129px" width="8" height="5"><path d="M0 0H7.5L3.75 4.5Z" fill="#1e395b"/></svg>
<svg style="left:608px;top:125px" width="17" height="13"><rect x="0.5" y="0.5" width="15" height="11" fill="#fff" stroke="#7a7a7a"/><rect x="9" y="1" width="6" height="10" fill="#4a9be0"/><path d="M4.5 1V11M9 1V11" stroke="#7a7a7a"/></svg>
<svg style="left:644px;top:123px" width="17" height="17"><circle cx="8" cy="8" r="7.8" fill="#0b62c0"/><text x="8" y="12.5" text-anchor="middle" font-family="Liberation Sans" font-weight="bold" font-size="12" fill="#fff">?</text></svg>
<div class="a" style="left:148px;top:147px;width:15px;height:291px;background:#f0f0f0"></div>
<div class="a" style="left:149px;top:164px;width:13px;height:251px;background:#c2c2c2"></div>
<svg style="left:151px;top:153px" width="9" height="6"><path d="M0.5 5L4.5 1L8.5 5" fill="none" stroke="#606060" stroke-width="1.4"/></svg>
<svg style="left:151px;top:427px" width="9" height="6"><path d="M0.5 1L4.5 5L8.5 1" fill="none" stroke="#606060" stroke-width="1.4"/></svg>
<div class="a" style="left:163px;top:147px;width:3px;height:291px;background:#fff"></div>
<div class="a" style="left:659px;top:147px;width:15px;height:291px;background:#f0f0f0"></div>
<div class="a" style="left:660px;top:164px;width:13px;height:246px;background:#c2c2c2"></div>
<svg style="left:662px;top:153px" width="9" height="6"><path d="M0.5 5L4.5 1L8.5 5" fill="none" stroke="#606060" stroke-width="1.4"/></svg>
<svg style="left:662px;top:427px" width="9" height="6"><path d="M0.5 1L4.5 5L8.5 1" fill="none" stroke="#606060" stroke-width="1.4"/></svg>
<div class="a" style="left:9px;top:387px;width:139px;height:24px;background:#d9d9d9"></div>
<svg style="left:33px;top:168px" width="16" height="14"><path d="M9.5 0.5L11.5 5L15.5 5.3L12.5 8.3L13.5 13L9.5 10.5L5.5 13L6.5 8.3L3.5 5.3L7.5 5Z" fill="#2b8ae0"/><path d="M0.5 6H4M0 9H4.5M1 12H5" stroke="#5aa8ec" stroke-width="1"/></svg>
<div class="t" style="left:53px;top:170px;font-size:12.5px;color:#000;transform:scaleX(0.9149);transform-origin:0 0;">Quick access</div>
<svg style="left:40px;top:193px" width="16" height="13"><rect x="0" y="0" width="16" height="12" fill="#1e8ae6"/><rect x="1" y="1" width="14" height="9" fill="#40a8f6"/><rect x="0" y="10" width="16" height="2" fill="#1273c8"/><rect x="11" y="10.5" width="1" height="1" fill="#fff"/><rect x="13" y="10.5" width="1" height="1" fill="#fff"/></svg>
<div class="t" style="left:61px;top:194px;font-size:12.5px;color:#000;transform:scaleX(0.9160);transform-origin:0 0;">Desktop</div>
<svg style="left:133px;top:194px" width="11" height="11"><path d="M6 0.5L10.5 5L8.5 5.5L6.5 7.5L6.5 9.5L1.5 4.5L3.5 4.5L5.5 2.5Z" fill="#9aa0a6"/><path d="M3.5 7.5L0.5 10.5" stroke="#9aa0a6" stroke-width="1.3"/></svg>
<svg style="left:40px;top:215px" width="16" height="17"><path d="M5.5 0H10.5V8H15.5L8 15.5L0.5 8H5.5Z" fill="#2b86d8"/></svg>
<div class="t" style="left:61px;top:218px;font-size:12.5px;color:#000;transform:scaleX(0.9493);transform-origin:0 0;">Downloads</div>
<svg style="left:133px;top:218px" width="11" height="11"><path d="M6 0.5L10.5 5L8.5 5.5L6.5 7.5L6.5 9.5L1.5 4.5L3.5 4.5L5.5 2.5Z" fill="#9aa0a6"/><path d="M3.5 7.5L0.5 10.5" stroke="#9aa0a6" stroke-width="1.3"/></svg>
<svg style="left:42px;top:238px" width="13" height="17"><path d="M0.5 0.5H9L12.5 4V16.5H0.5Z" fill="#fff" stroke="#8a8a8a"/><path d="M2.5 4H6M2.5 7H10M2.5 9.5H10M2.5 12H10M2.5 14H10" stroke="#3a7fc8" stroke-width="1"/></svg>
<div class="t" style="left:61px;top:242px;font-size:12.5px;color:#000;transform:scaleX(0.9570);transform-origin:0 0;">Documents</div>
<svg style="left:133px;top:242px" width="11" height="11"><path d="M6 0.5L10.5 5L8.5 5.5L6.5 7.5L6.5 9.5L1.5 4.5L3.5 4.5L5.5 2.5Z" fill="#9aa0a6"/><path d="M3.5 7.5L0.5 10.5" stroke="#9aa0a6" stroke-width="1.3"/></svg>
<svg style="left:40px;top:264px" width="16" height="13"><rect x="0.5" y="0.5" width="15" height="12" fill="#fff" stroke="#8a8a8a"/><rect x="2" y="2" width="12" height="9" fill="#b8d8ee"/><path d="M2 7Q7 5 14 8V11H2Z" fill="#2f6e3e"/></svg>
<div class="t" style="left:61px;top:266px;font-size:12.5px;color:#000;transform:scaleX(0.9191);transform-origin:0 0;">Pictures</div>
<svg style="left:133px;top:266px" width="11" height="11"><path d="M6 0.5L10.5 5L8.5 5.5L6.5 7.5L6.5 9.5L1.5 4.5L3.5 4.5L5.5 2.5Z" fill="#9aa0a6"/><path d="M3.5 7.5L0.5 10.5" stroke="#9aa0a6" stroke-width="1.3"/></svg>
<svg style="left:42px;top:287px" width="14" height="16"><path d="M0.5 0.5H10L12.5 3V15.5H0.5Z" fill="#f8d775" stroke="#e3bb4f" stroke-width="0.8"/><path d="M10 9H13V15.5H10Z" fill="#efc55b"/></svg>
<div class="t" style="left:61px;top:290px;font-size:12.5px;color:#000;width:86px;overflow:hidden">[HieuHien.vn]Ac</div>
<svg style="left:42px;top:311px" width="14" height="16"><path d="M0.5 0.5H10L12.5 3V15.5H0.5Z" fill="#f8d775" stroke="#e3bb4f" stroke-width="0.8"/><path d="M10 9H13V15.5H10Z" fill="#efc55b"/></svg>
<div class="t" style="left:61px;top:314px;font-size:12.5px;color:#000;transform:scaleX(0.9279);transform-origin:0 0;">Data</div>
<svg style="left:42px;top:335px" width="14" height="16"><path d="M0.5 0.5H10L12.5 3V15.5H0.5Z" fill="#f8d775" stroke="#e3bb4f" stroke-width="0.8"/><path d="M10 9H13V15.5H10Z" fill="#efc55b"/></svg>
<div class="t" style="left:61px;top:338px;font-size:12.5px;color:#000;width:86px;overflow:hidden">huong dan adob</div>
<svg style="left:42px;top:359px" width="14" height="16"><path d="M0.5 0.5H10L12.5 3V15.5H0.5Z" fill="#f8d775" stroke="#e3bb4f" stroke-width="0.8"/><path d="M10 9H13V15.5H10Z" fill="#efc55b"/></svg>
<div class="t" style="left:61px;top:362px;font-size:12.5px;color:#000;transform:scaleX(0.9451);transform-origin:0 0;">Video</div>
<svg style="left:32px;top:391px" width="17" height="17"><rect x="0.5" y="0.5" width="16" height="11" fill="#3aa0e8" stroke="#2a86d0"/><rect x="2" y="2" width="13" height="8" fill="#7ccaf5"/><rect x="7" y="12" width="3" height="2" fill="#8aa"/><rect x="3" y="14.5" width="11" height="1.5" fill="#8ab"/></svg>
<div class="t" style="left:53px;top:394px;font-size:12.5px;color:#000;transform:scaleX(0.8661);transform-origin:0 0;">This PC</div>
<svg style="left:32px;top:422px" width="17" height="18"><circle cx="11" cy="6" r="5.5" fill="#4aa0d8"/><path d="M7 3Q11 6 15 3M6 7Q11 9 16 7" fill="none" stroke="#9cd0f0" stroke-width="0.8"/><rect x="0.5" y="6.5" width="11" height="8" fill="#3aa0e8" stroke="#2a86d0"/><rect x="5" y="15" width="2" height="2" fill="#999"/><rect x="2" y="16.5" width="8" height="1" fill="#aab"/></svg>
<div class="t" style="left:53px;top:426px;font-size:12.5px;color:#000;transform:scaleX(0.9816);transform-origin:0 0;">Network</div>
<div class="a" style="left:9px;top:438px;width:665px;height:76px;background:#f0f0f0"></div>
<div class="t" style="left:138px;top:455px;font-size:12.5px;color:#000;transform:scaleX(0.9083);transform-origin:0 0;">File name:</div>
<div class="a" style="left:197px;top:449px;width:261px;height:23px;background:#fff;border:1px solid #7a7a7a"></div>
<div class="t" style="left:201px;top:456px;font-size:12.5px;color:#000;transform:scaleX(0.9191);transform-origin:0 0;">[KARAOKE] ĐỘ TA KHÔNG ĐỘ NÀNG - ANH</div>
<svg style="left:446px;top:458px" width="9" height="6"><path d="M0.5 0.5L4.5 4.5L8.5 0.5" fill="none" stroke="#444" stroke-width="1.1"/></svg>
<div class="a" style="left:470px;top:449px;width:187px;height:23px;background:#e5e5e5;border:1px solid #adadad"></div>
<div class="t" style="left:474px;top:454px;font-size:12.5px;color:#000;width:163px;overflow:hidden"><span style="display:inline-block;transform:scaleX(0.93);transform-origin:0 0">All Supported Media (*.264, *.3gp, *.aac)</span></div>
<svg style="left:645px;top:458px" width="9" height="6"><path d="M0.5 0.5L4.5 4.5L8.5 0.5" fill="none" stroke="#444" stroke-width="1.1"/></svg>
<div class="a" style="left:471px;top:478px;width:86px;height:24px;background:#e1e1e1;border:2px solid #0078d7"></div>
<div class="t" style="left:500px;top:484px;font-size:12.5px;color:#000;transform:scaleX(0.9157);transform-origin:0 0;">Open</div>
<div class="a" style="left:571px;top:478px;width:86px;height:24px;background:#e1e1e1;border:1px solid #adadad"></div>
<div class="t" style="left:596px;top:484px;font-size:12.5px;color:#000;transform:scaleX(0.8996);transform-origin:0 0;">Cancel</div>
<div class="a" style="left:670px;top:505px;width:2px;height:2px;background:#b5b5b5"></div>
<div class="a" style="left:667px;top:508px;width:2px;height:2px;background:#b5b5b5"></div>
<div class="a" style="left:670px;top:508px;width:2px;height:2px;background:#b5b5b5"></div>
<div class="a" style="left:664px;top:511px;width:2px;height:2px;background:#b5b5b5"></div>
<div class="a" style="left:667px;top:511px;width:2px;height:2px;background:#b5b5b5"></div>
<div class="a" style="left:670px;top:511px;width:2px;height:2px;background:#b5b5b5"></div>
<div class="a" style="left:0;top:0;width:1359px;height:438px;overflow:hidden">
<div class="a" style="left:300px;top:153px;width:106px;height:162px;background:#cce8ff;border:1px solid #99d1ff"></div>
<div class="a" style="left:298px;top:178px;width:110px;height:137px;border:3px solid #f00;box-shadow:2px 2px 3px rgba(0,0,0,0.35)"></div>
<div class="a" style="left:305px;top:155px;width:13px;height:13px;background:#fff;border:1px solid #333"></div>
<svg style="left:307px;top:157px" width="10" height="9"><path d="M0.5 4.5L3.5 7.5L9 1" fill="none" stroke="#222" stroke-width="1.2"/></svg>
<svg style="left:203px;top:165px" width="62" height="84"><path d="M0 0H49V75H0Z" fill="#f8d77c"/><path d="M12.7 4.9L60.2 11.3V76.8L43 75L12.7 74Z" fill="#07090d"/><path d="M44 26H46.5V40H44ZM49 26H51.5V40H49ZM53 26H57V28H53ZM53 38H57V40H53ZM55 28H57V38H55Z" fill="#18a8f0"/><path d="M7 5L43.6 18V82.3L16.8 74.7Z" fill="#1c2830"/><path d="M20 22L34 27V36L20 32Z" fill="#2a3a44"/><path d="M18 27L30 31L30 60L18 56Z" fill="#9a2a22"/><path d="M20 32L28 35L28 44L20 41Z" fill="#d8a030"/><path d="M21 45L28 47L28 54L21 52Z" fill="#4060b0"/><path d="M30 31L37 33L38 62L30 60Z" fill="#3a4a50"/><path d="M18 66L36 71M18 69L34 73" stroke="#8a9090" stroke-width="0.8"/><path d="M0.3 0L17.5 15.5L16.8 81.6L0.3 68.5Z" fill="#f6d682"/><path d="M0.3 0L17.5 15.5L17.3 20L0.3 4Z" fill="#fae2a0"/></svg>
<div class="t" style="left:221.05px;top:253px;font-size:12.5px;color:#000;transform:scaleX(0.9538);transform-origin:0 0;">Done</div>
<svg style="left:306px;top:191px" width="93" height="56"><rect x="0" y="0" width="93" height="56" fill="#707070"/><rect x="10" y="0" width="73" height="56" fill="#262626"/><svg x="10" y="2" width="73" height="51" viewBox="0 0 73 51" preserveAspectRatio="none"><defs><linearGradient id="g2" x1="0" y1="0" x2="0" y2="1"><stop offset="0" stop-color="#90a8b0"/><stop offset="0.5" stop-color="#b8c8cc"/><stop offset="0.8" stop-color="#a8b0b8"/><stop offset="1" stop-color="#6a6c88"/></linearGradient><radialGradient id="r2" cx="0.6" cy="0.6" r="0.3"><stop offset="0" stop-color="#f2f2f2"/><stop offset="1" stop-color="#f2f2f2" stop-opacity="0"/></radialGradient></defs><rect width="73" height="51" fill="url(#g2)"/><rect width="73" height="51" fill="url(#r2)"/><path d="M0 38Q10 32 22 40Q30 46 40 42Q48 46 56 50V51H0Z" fill="#3e4064" opacity="0.9"/><path d="M30 40Q40 34 48 42Q58 38 73 44V51H30Z" fill="#dcdfe2" opacity="0.85"/><path d="M6 17Q11 11 16 14Q19 17 24 13M9 21Q15 18 21 22" fill="none" stroke="#a02828" stroke-width="1.8"/><path d="M12 28H26M14 31H24" stroke="#2a2a2a" stroke-width="1"/><path d="M42 14Q46 22 44 30Q48 36 54 34" stroke="#5a5a80" stroke-width="1" fill="none" opacity="0.7"/><ellipse cx="50" cy="30" rx="9" ry="12" fill="#e6e2e4" opacity="0.6"/></svg><rect x="2" y="2.5" width="6" height="5.2" fill="#cce8ff"/><rect x="85" y="2.5" width="6" height="5.2" fill="#cce8ff"/><rect x="2" y="11.7" width="6" height="5.2" fill="#cce8ff"/><rect x="85" y="11.7" width="6" height="5.2" fill="#cce8ff"/><rect x="2" y="20.8" width="6" height="5.2" fill="#cce8ff"/><rect x="85" y="20.8" width="6" height="5.2" fill="#cce8ff"/><rect x="2" y="30.0" width="6" height="5.2" fill="#cce8ff"/><rect x="85" y="30.0" width="6" height="5.2" fill="#cce8ff"/><rect x="2" y="39.2" width="6" height="5.2" fill="#cce8ff"/><rect x="85" y="39.2" width="6" height="5.2" fill="#cce8ff"/><rect x="2" y="48.3" width="6" height="5.2" fill="#cce8ff"/><rect x="85" y="48.3" width="6" height="5.2" fill="#cce8ff"/></svg>
<div class="t" style="left:313.15px;top:253px;font-size:12.5px;color:#000;transform:scaleX(0.9006);transform-origin:0 0;">[KARAOKE] ĐỘ</div>
<div class="t" style="left:314.25px;top:268px;font-size:12.5px;color:#000;transform:scaleX(0.9140);transform-origin:0 0;">TA KHÔNG ĐỘ</div>
<div class="t" style="left:317.50px;top:283px;font-size:12.5px;color:#000;transform:scaleX(0.9873);transform-origin:0 0;">NÀNG - ANH</div>
<div class="t" style="left:309.00px;top:298px;font-size:12.5px;color:#000;transform:scaleX(0.8918);transform-origin:0 0;">DUY - KARAOK...</div>
<svg style="left:425px;top:191px" width="93" height="56"><rect x="0" y="0" width="93" height="56" fill="#707070"/><rect x="10" y="0" width="73" height="56" fill="#262626"/><svg x="10" y="2" width="73" height="51" viewBox="0 0 73 51" preserveAspectRatio="none"><defs><radialGradient id="r3" cx="0.25" cy="0.45" r="0.9"><stop offset="0" stop-color="#3a70ff"/><stop offset="0.45" stop-color="#1836e0"/><stop offset="1" stop-color="#0a108a"/></radialGradient></defs><rect width="73" height="51" fill="url(#r3)"/><path d="M0 30H18" stroke="#8ab0ff" stroke-width="0.8" opacity="0.6"/><circle cx="28" cy="12" r="2.6" fill="#4a3428"/><path d="M23 16H32L34 26V36L33 51H26L24 36L22 26Z" fill="#a5acc0"/><path d="M25 36H33L32 51H26Z" fill="#8a90a4"/><path d="M22 18L20 24" stroke="#222" stroke-width="1.5"/><circle cx="40" cy="8" r="0.8" fill="#9ab8ff"/><circle cx="50" cy="14" r="0.8" fill="#9ab8ff"/><circle cx="45" cy="24" r="0.8" fill="#9ab8ff"/><circle cx="58" cy="30" r="0.8" fill="#9ab8ff"/></svg><rect x="2" y="2.5" width="6" height="5.2" fill="#fff"/><rect x="85" y="2.5" width="6" height="5.2" fill="#fff"/><rect x="2" y="11.7" width="6" height="5.2" fill="#fff"/><rect x="85" y="11.7" width="6" height="5.2" fill="#fff"/><rect x="2" y="20.8" width="6" height="5.2" fill="#fff"/><rect x="85" y="20.8" width="6" height="5.2" fill="#fff"/><rect x="2" y="30.0" width="6" height="5.2" fill="#fff"/><rect x="85" y="30.0" width="6" height="5.2" fill="#fff"/><rect x="2" y="39.2" width="6" height="5.2" fill="#fff"/><rect x="85" y="39.2" width="6" height="5.2" fill="#fff"/><rect x="2" y="48.3" width="6" height="5.2" fill="#fff"/><rect x="85" y="48.3" width="6" height="5.2" fill="#fff"/></svg>
<div class="t" style="left:430.10px;top:253px;font-size:12.5px;color:#000;transform:scaleX(0.9698);transform-origin:0 0;">Cánh hồng phai</div>
<div class="t" style="left:437.65px;top:268px;font-size:12.5px;color:#000;transform:scaleX(0.9884);transform-origin:0 0;">- Trấn Thành</div>
<div class="t" style="left:438.40px;top:283px;font-size:12.5px;color:#000;transform:scaleX(0.9371);transform-origin:0 0;">karaoke HD -</div>
<div class="t" style="left:429.40px;top:298px;font-size:12.5px;color:#000;transform:scaleX(0.9558);transform-origin:0 0;">Beat chuẩn.mp4</div>
<svg style="left:544px;top:191px" width="93" height="56"><rect x="0" y="0" width="93" height="56" fill="#707070"/><rect x="10" y="0" width="73" height="56" fill="#262626"/><svg x="10" y="2" width="73" height="51" viewBox="0 0 73 51" preserveAspectRatio="none"><defs><linearGradient id="g4" x1="0" y1="0" x2="1" y2="0"><stop offset="0" stop-color="#8a6e58"/><stop offset="0.35" stop-color="#a88e78"/><stop offset="0.6" stop-color="#c8b8a8"/><stop offset="0.85" stop-color="#d8d4d0"/><stop offset="1" stop-color="#b8aaa0"/></linearGradient></defs><rect width="73" height="51" fill="url(#g4)"/><path d="M52 0H73V20H52Z" fill="#e8ecf0"/><path d="M0 0H20V51H0Z" fill="#7a5e4a" opacity="0.6"/><path d="M4 8Q14 3 26 10L23 13H6Z" fill="#4a3a30"/><path d="M2 22H12V48H2Z" fill="#5a6a3a" opacity="0.7"/><path d="M30 4H40V30H30Z" fill="#6a4a3a" opacity="0.5"/><path d="M0 44H73V51H0Z" fill="#9e9a98" opacity="0.6"/><circle cx="24" cy="30" r="5" fill="#c49a80"/><path d="M20 28H28" stroke="#222" stroke-width="1.6"/><path d="M12 51Q14 38 24 36Q34 38 38 51Z" fill="#a2a6ac"/><text x="36" y="26" font-family="Liberation Sans" font-size="7" font-weight="bold" fill="#c8e020" textLength="37" lengthAdjust="spacingAndGlyphs">HONGKONG</text><path d="M62 36L66 51H59Z" fill="#b03020"/></svg><rect x="2" y="2.5" width="6" height="5.2" fill="#fff"/><rect x="85" y="2.5" width="6" height="5.2" fill="#fff"/><rect x="2" y="11.7" width="6" height="5.2" fill="#fff"/><rect x="85" y="11.7" width="6" height="5.2" fill="#fff"/><rect x="2" y="20.8" width="6" height="5.2" fill="#fff"/><rect x="85" y="20.8" width="6" height="5.2" fill="#fff"/><rect x="2" y="30.0" width="6" height="5.2" fill="#fff"/><rect x="85" y="30.0" width="6" height="5.2" fill="#fff"/><rect x="2" y="39.2" width="6" height="5.2" fill="#fff"/><rect x="85" y="39.2" width="6" height="5.2" fill="#fff"/><rect x="2" y="48.3" width="6" height="5.2" fill="#fff"/><rect x="85" y="48.3" width="6" height="5.2" fill="#fff"/></svg>
<div class="t" style="left:556.00px;top:253px;font-size:12.5px;color:#000;transform:scaleX(0.9775);transform-origin:0 0;">HongKong 1-</div>
<div class="t" style="left:567.00px;top:268px;font-size:12.5px;color:#000;transform:scaleX(0.9227);transform-origin:0 0;">Karaoke -</div>
<div class="t" style="left:545.70px;top:283px;font-size:12.5px;color:#000;transform:scaleX(0.9342);transform-origin:0 0;">Nguyễn Trọng Tài</div>
<div class="t" style="left:546.50px;top:298px;font-size:12.5px;color:#000;transform:scaleX(0.9492);transform-origin:0 0;">- (Chuyện tình l...</div>
<svg style="left:187px;top:319px" width="93" height="67"><rect x="0" y="0" width="93" height="67" fill="#707070"/><rect x="10" y="0" width="73" height="67" fill="#262626"/><svg x="10" y="2" width="73" height="62" viewBox="0 0 73 62" preserveAspectRatio="none"><defs><linearGradient id="g5" x1="0" y1="0" x2="1" y2="1"><stop offset="0" stop-color="#5a6066"/><stop offset="0.5" stop-color="#8a8680"/><stop offset="1" stop-color="#4a4844"/></linearGradient></defs><rect width="73" height="62" fill="url(#g5)"/><path d="M29 0H60L73 50V62H44Z" fill="#3e4ed0"/><path d="M60 0H73V50Z" fill="#8a7a78"/><path d="M8 10Q18 20 16 36Q14 50 24 62" fill="none" stroke="#3a3630" stroke-width="5"/><path d="M14 28Q24 30 34 26" fill="none" stroke="#5a5048" stroke-width="3"/><path d="M0 0H22V6H0Z" fill="#a83030" opacity="0.6"/><g font-family="Liberation Sans" font-weight="bold" font-size="7.5" fill="#1a2ae8" stroke="#c8d0ff" stroke-width="0.4"><text x="35" y="8">Phai</text><text x="41" y="18">Dau</text><text x="45" y="27">Cuoc</text><text x="51" y="37">Tinh</text></g><text x="42" y="47" font-family="Liberation Sans" font-weight="bold" font-size="7.5" fill="#ff5a20" textLength="29" lengthAdjust="spacingAndGlyphs">Acoustis</text></svg><rect x="2" y="2.5" width="6" height="5.4" fill="#fff"/><rect x="85" y="2.5" width="6" height="5.4" fill="#fff"/><rect x="2" y="11.9" width="6" height="5.4" fill="#fff"/><rect x="85" y="11.9" width="6" height="5.4" fill="#fff"/><rect x="2" y="21.4" width="6" height="5.4" fill="#fff"/><rect x="85" y="21.4" width="6" height="5.4" fill="#fff"/><rect x="2" y="30.8" width="6" height="5.4" fill="#fff"/><rect x="85" y="30.8" width="6" height="5.4" fill="#fff"/><rect x="2" y="40.2" width="6" height="5.4" fill="#fff"/><rect x="85" y="40.2" width="6" height="5.4" fill="#fff"/><rect x="2" y="49.6" width="6" height="5.4" fill="#fff"/><rect x="85" y="49.6" width="6" height="5.4" fill="#fff"/><rect x="2" y="59.1" width="6" height="5.4" fill="#fff"/><rect x="85" y="59.1" width="6" height="5.4" fill="#fff"/></svg>
<div class="t" style="left:195.40px;top:392px;font-size:12.5px;color:#000;transform:scaleX(0.9289);transform-origin:0 0;">Karaoke - Phai</div>
<div class="t" style="left:190.70px;top:407px;font-size:12.5px;color:#000;transform:scaleX(0.9424);transform-origin:0 0;">Dấu Cuộc Tình -</div>
<div class="t" style="left:206.80px;top:422px;font-size:12.5px;color:#000;transform:scaleX(0.9479);transform-origin:0 0;">Tone Nam</div>
<div class="t" style="left:189.80px;top:437px;font-size:12.5px;color:#000;transform:scaleX(0.8795);transform-origin:0 0;">Karaoke Lâm Bảo</div>
<svg style="left:306px;top:330px" width="93" height="56"><rect x="0" y="0" width="93" height="56" fill="#707070"/><rect x="10" y="0" width="73" height="56" fill="#262626"/><svg x="10" y="2" width="73" height="51" viewBox="0 0 73 51" preserveAspectRatio="none"><defs><linearGradient id="g6" x1="0" y1="0" x2="0" y2="1"><stop offset="0" stop-color="#0e58d8"/><stop offset="0.45" stop-color="#4aa0f0"/><stop offset="0.6" stop-color="#a8d4f4"/></linearGradient><linearGradient id="w6" x1="0" y1="0" x2="0" y2="1"><stop offset="0" stop-color="#40a8b8"/><stop offset="1" stop-color="#2a7890"/></linearGradient></defs><rect width="73" height="51" fill="url(#g6)"/><ellipse cx="22" cy="15" rx="8" ry="2.5" fill="#fff"/><ellipse cx="38" cy="17" rx="7" ry="2.5" fill="#f4f8ff"/><ellipse cx="54" cy="17" rx="8" ry="2" fill="#e8f0ff"/><ellipse cx="8" cy="22" rx="4" ry="1.5" fill="#e8f0ff"/><path d="M0 33Q20 30 40 24Q55 18 73 20V38H0Z" fill="#3a8a28"/><path d="M0 34Q30 30 73 30V38H0Z" fill="#2a6a1a"/><path d="M16 37H73V39H16Z" fill="#b0c050"/><rect x="0" y="39" width="73" height="9" fill="url(#w6)"/><path d="M30 41Q50 39 73 41V46H30Z" fill="#3a7a30" opacity="0.6"/><rect x="0" y="48" width="73" height="3" fill="#40b030"/></svg><rect x="2" y="2.5" width="6" height="5.2" fill="#fff"/><rect x="85" y="2.5" width="6" height="5.2" fill="#fff"/><rect x="2" y="11.7" width="6" height="5.2" fill="#fff"/><rect x="85" y="11.7" width="6" height="5.2" fill="#fff"/><rect x="2" y="20.8" width="6" height="5.2" fill="#fff"/><rect x="85" y="20.8" width="6" height="5.2" fill="#fff"/><rect x="2" y="30.0" width="6" height="5.2" fill="#fff"/><rect x="85" y="30.0" width="6" height="5.2" fill="#fff"/><rect x="2" y="39.2" width="6" height="5.2" fill="#fff"/><rect x="85" y="39.2" width="6" height="5.2" fill="#fff"/><rect x="2" y="48.3" width="6" height="5.2" fill="#fff"/><rect x="85" y="48.3" width="6" height="5.2" fill="#fff"/></svg>
<div class="t" style="left:310.85px;top:392px;font-size:12.5px;color:#000;transform:scaleX(0.9370);transform-origin:0 0;">Không Cần Phải</div>
<div class="t" style="left:316.85px;top:407px;font-size:12.5px;color:#000;transform:scaleX(0.9094);transform-origin:0 0;">Hứa Đâu Em -</div>
<div class="t" style="left:319.50px;top:422px;font-size:12.5px;color:#000;transform:scaleX(0.9409);transform-origin:0 0;">Phạm Khánh</div>
<div class="t" style="left:311.00px;top:437px;font-size:12.5px;color:#000;transform:scaleX(0.9555);transform-origin:0 0;">Hưng - Karaoke</div>
<svg style="left:425px;top:330px" width="93" height="56"><rect x="0" y="0" width="93" height="56" fill="#707070"/><rect x="10" y="0" width="73" height="56" fill="#262626"/><svg x="10" y="2" width="73" height="51" viewBox="0 0 73 51" preserveAspectRatio="none"><defs><radialGradient id="r7" cx="0.5" cy="0.5" r="0.7"><stop offset="0" stop-color="#b0a478"/><stop offset="0.6" stop-color="#8a8458"/><stop offset="1" stop-color="#5a6038"/></radialGradient></defs><rect width="73" height="51" fill="url(#r7)"/><ellipse cx="14" cy="24" rx="14" ry="18" fill="#6a7a40" opacity="0.6"/><ellipse cx="55" cy="40" rx="16" ry="10" fill="#c8b898" opacity="0.6"/><path d="M6 8Q16 14 26 20" stroke="#c8b040" stroke-width="2.5" fill="none"/><circle cx="27" cy="22" r="2.8" fill="#e0c040"/><path d="M36 4L38 14" stroke="#c8b040" stroke-width="2"/><ellipse cx="44" cy="38" rx="13" ry="10" fill="#f0a010"/><ellipse cx="41" cy="35" rx="7" ry="5" fill="#f8b828"/><path d="M47 28Q50 14 60 3Q67 2 67 12Q68 24 62 30Z" fill="#2e2420"/><path d="M53 22L61 8M57 24L64 12" stroke="#6a7a90" stroke-width="0.6"/><path d="M20 48Q35 44 50 48" stroke="#4a5a3a" stroke-width="2" fill="none"/></svg><rect x="2" y="2.5" width="6" height="5.2" fill="#fff"/><rect x="85" y="2.5" width="6" height="5.2" fill="#fff"/><rect x="2" y="11.7" width="6" height="5.2" fill="#fff"/><rect x="85" y="11.7" width="6" height="5.2" fill="#fff"/><rect x="2" y="20.8" width="6" height="5.2" fill="#fff"/><rect x="85" y="20.8" width="6" height="5.2" fill="#fff"/><rect x="2" y="30.0" width="6" height="5.2" fill="#fff"/><rect x="85" y="30.0" width="6" height="5.2" fill="#fff"/><rect x="2" y="39.2" width="6" height="5.2" fill="#fff"/><rect x="85" y="39.2" width="6" height="5.2" fill="#fff"/><rect x="2" y="48.3" width="6" height="5.2" fill="#fff"/><rect x="85" y="48.3" width="6" height="5.2" fill="#fff"/></svg>
<div class="t" style="left:447.60px;top:392px;font-size:12.5px;color:#000;transform:scaleX(0.9267);transform-origin:0 0;">Tình Đơn</div>
<div class="t" style="left:437.25px;top:407px;font-size:12.5px;color:#000;transform:scaleX(0.9450);transform-origin:0 0;">Phương.mp4</div>
</div>
</body></html>
